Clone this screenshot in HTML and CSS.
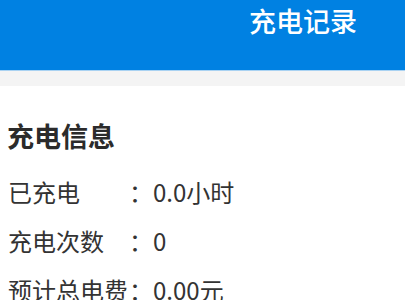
FILE: index.html
```html
<!DOCTYPE html>
<html lang="zh-CN">
<head>
    <meta charset="UTF-8">
    <meta name="viewport" content="width=device-width, initial-scale=1.0">
    <title>充电记录</title>
    <link rel="stylesheet" href="styles.css">
</head>
<body>
    <div class="header">
        <div class="header-title">充电记录</div>
    </div>
    <div class="divider"></div>

    <div class="info">
        <h2 class="info-title">充电信息</h2>
        <div class="info-list">
            <div class="info-row">
                <span class="info-label">已充电</span><span class="info-colon">：</span><span class="info-value">0.0小时</span>
            </div>
            <div class="info-row">
                <span class="info-label">充电次数</span><span class="info-colon">：</span><span class="info-value">0</span>
            </div>
            <div class="info-row">
                <span class="info-label">预计总电费</span><span class="info-colon">：</span><span class="info-value">0.00元</span>
            </div>
        </div>
    </div>
</body>
</html>
```

FILE: styles.css
```css
body {
    margin: 0;
    font-family: "Noto Sans CJK SC", "Noto Sans", sans-serif;
    background: #fff;
    color: #333;
}

.header {
    height: 70px;
    background: #0081e2;
    border-bottom: 1px solid #a9d2f2;
    display: flex;
    align-items: flex-start;
    padding-left: 249px;
}

.header-title {
    color: #fff;
    font-size: 27px;
    font-weight: 500;
    line-height: 42px;
}

.divider {
    height: 15px;
    background: #f4f4f4;
}

.info {
    padding: 28px 8px 0 7px;
}

.info-title {
    margin: 0;
    font-size: 27px;
    font-weight: bold;
    line-height: 44px;
    color: #2b2b2b;
}

.info-list {
    margin-top: 9px;
}

.info-row {
    display: flex;
    font-size: 24px;
    line-height: 49px;
}

.info-label {
    width: 121px;
    padding-left: 1px;
}

.info-colon {
    width: 24px;
}
```
